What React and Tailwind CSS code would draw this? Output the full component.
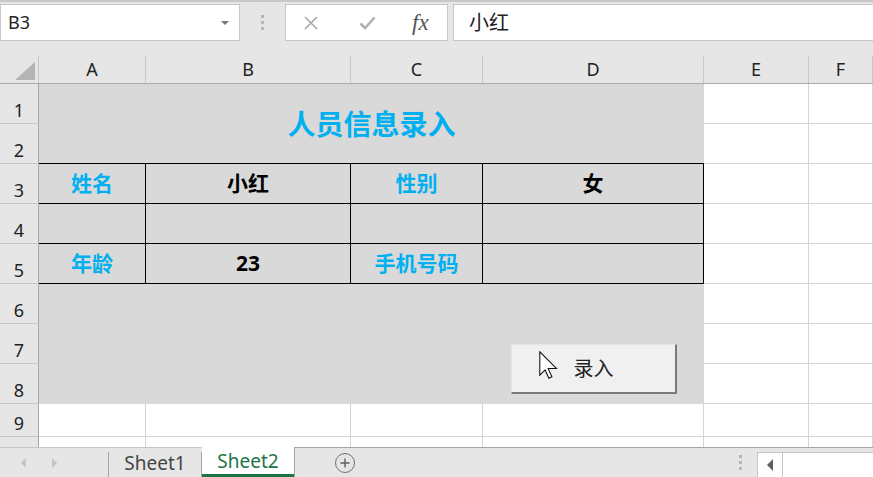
import { Plus } from 'lucide-react';

const font = { fontFamily: '"Noto Sans", "Noto Sans CJK SC", sans-serif' };

function Toolbar() {
  return (
    <div className="h-[56px] bg-[#e6e6e6] border-t-2 border-[#c8c8c8] flex items-start pt-[2px]">
      <div className="w-[240px] h-[37px] bg-white border border-[#c6c6c6] flex items-center justify-between pl-[7px] pr-[10px]">
        <span className="text-[18px] text-[#222]">B3</span>
        <span className="w-0 h-0 border-l-[4px] border-r-[4px] border-t-[4px] border-l-transparent border-r-transparent border-t-[#777]" />
      </div>
      <div className="w-[45px] h-[37px] flex flex-col items-center justify-center gap-[3px]">
        <span className="w-[3px] h-[3px] bg-[#b5b5b5]" />
        <span className="w-[3px] h-[3px] bg-[#b5b5b5]" />
        <span className="w-[3px] h-[3px] bg-[#b5b5b5]" />
      </div>
      <div className="w-[163px] h-[37px] bg-white border border-[#c6c6c6] flex items-center">
        <svg className="ml-[17px]" width="16" height="16" viewBox="0 0 16 16" stroke="#a8a8a8" strokeWidth="1.6" fill="none">
          <path d="M2 2l12 12M14 2L2 14" />
        </svg>
        <svg className="ml-[40px]" width="17" height="14" viewBox="0 0 17 14" stroke="#b0b0b0" strokeWidth="2.6" fill="none">
          <path d="M1.5 7.5l4.5 4.5L15.5 1.5" />
        </svg>
        <span className="ml-[36px] text-[23px] italic text-[#555] leading-none" style={{ fontFamily: '"Liberation Serif", serif' }}>
          fx
        </span>
      </div>
      <div className="ml-[5px] flex-1 h-[37px] bg-white border border-[#c6c6c6] border-r-0 flex items-center pl-[15px]">
        <span className="text-[20px] text-[#222]">小红</span>
      </div>
    </div>
  );
}

function ColumnHeader() {
  const cols = [
    ['A', 'w-[107px]'],
    ['B', 'w-[205px]'],
    ['C', 'w-[132px]'],
    ['D', 'w-[221px]'],
    ['E', 'w-[105px]'],
    ['F', 'flex-1'],
  ];
  return (
    <div className="h-[28px] bg-[#e6e6e6] border-b border-[#ababab] flex">
      <div className="w-[39px] border-r border-[#c8c8c8] flex items-end justify-end pr-[3px] pb-[3px]">
        <span className="w-0 h-0 border-l-[20px] border-b-[18px] border-l-transparent border-b-[#b4b4b4]" />
      </div>
      {cols.map(([c, w]) => (
        <div key={c} className={`${w} border-r border-[#c8c8c8] flex items-center justify-center text-[18px] text-[#222]`}>
          {c}
        </div>
      ))}
    </div>
  );
}

function RowHead({ n, last }) {
  return (
    <div
      className={`bg-[#e6e6e6] border-r border-[#a6a6a6] ${last ? '' : 'border-b border-b-[#c6c6c6]'} flex items-end justify-center pb-[4px] text-[18px] text-[#222] leading-none overflow-hidden`}
    >
      {n}
    </div>
  );
}

function Blank({ last }) {
  return <div className={`bg-white border-r border-[#d4d4d4] ${last ? '' : 'border-b'}`} />;
}

function Cursor() {
  return (
    <svg className="absolute left-[27px] top-[6px]" width="19" height="28" viewBox="0 0 12.5 18.5">
      <path d="M0.5 0.5V16L4 12.5L6.5 18L8.5 17L6 11.5H11.5Z" fill="white" stroke="#111" strokeWidth="0.7" strokeLinejoin="miter" />
    </svg>
  );
}

function Form() {
  const label = 'text-[21px] font-bold text-[#00b0f0]';
  const value = 'text-[21px] font-bold text-black';
  const cell = 'border-r border-b border-black flex items-center justify-center';
  const rows = [
    [['姓名', label], ['小红', value], ['性别', label], ['女', value]],
    [['', label], ['', value], ['', label], ['', value]],
    [['年龄', label], ['23', value], ['手机号码', label], ['', value]],
  ];
  const widths = ['w-[107px]', 'w-[205px]', 'w-[132px]', 'w-[221px]'];
  return (
    <div className="col-start-2 col-span-4 row-start-1 row-span-8 bg-[#d9d9d9] flex flex-col">
      <div className="h-[79px] flex items-center justify-center text-[28px] font-bold text-[#00b0f0]">人员信息录入</div>
      <div className="border-t border-black">
        {rows.map((r, i) => (
          <div key={i} className="flex h-[40px]">
            {r.map(([t, cls], j) => (
              <div key={j} className={`${widths[j]} ${cell} ${cls}`}>
                {t}
              </div>
            ))}
          </div>
        ))}
      </div>
      <div className="flex-1 pt-[60px] pl-[472px]">
        <div className="relative w-[166px] h-[50px] bg-[#f0f0f0] border-t border-l border-[#e4e4e4] border-r-2 border-b-2 border-r-[#7a7a7a] border-b-[#7a7a7a] flex items-center justify-center">
          <Cursor />
          <span className="text-[20px] text-[#222]">录入</span>
        </div>
      </div>
    </div>
  );
}

function Sheet() {
  const body = [];
  for (let r = 1; r <= 8; r++) {
    body.push(<RowHead key={`h${r}`} n={r} />);
    body.push(<Blank key={`e${r}`} />);
    body.push(<Blank key={`f${r}`} />);
  }
  for (let r = 9; r <= 10; r++) {
    body.push(<RowHead key={`h${r}`} n={r === 9 ? 9 : ''} last={r === 10} />);
    for (let c = 0; c < 6; c++) body.push(<Blank key={`${r}-${c}`} last={r === 10} />);
  }
  return (
    <div className="grid grid-cols-[39px_107px_205px_132px_221px_105px_1fr] grid-rows-[repeat(8,40px)_33px_10px]">
      <Form />
      {body}
    </div>
  );
}

function TabBar() {
  return (
    <div className="h-[30px] bg-[#e6e6e6] flex">
      <div className="w-[108px] border-t border-[#c6c6c6] flex items-center pl-[21px] gap-[26px]">
        <span className="w-0 h-0 border-t-[5px] border-b-[5px] border-r-[5px] border-t-transparent border-b-transparent border-r-[#c4c4c4]" />
        <span className="w-0 h-0 border-t-[5px] border-b-[5px] border-l-[5px] border-t-transparent border-b-transparent border-l-[#c4c4c4]" />
      </div>
      <div className="w-[94px] border-t border-[#c6c6c6] flex items-stretch">
        <div className="w-full mt-[4px] border-l border-r border-[#a6a6a6] flex items-center justify-center text-[19px] text-[#444] pb-[3px]">
          Sheet1
        </div>
      </div>
      <div className="w-[92px] bg-white border-b-[3px] border-[#217346] flex items-center justify-center text-[19px] text-[#217346] pt-[1px]">
        Sheet2
      </div>
      <div className="flex-1 border-t border-l border-[#a6a6a6] flex items-center">
        <div className="ml-[40px] w-[20px] h-[20px] rounded-full border-[1.5px] border-[#707070] flex items-center justify-center">
          <Plus size={14} strokeWidth={2.4} color="#606060" />
        </div>
        <div className="ml-auto mr-[15px] flex flex-col gap-[3px]">
          <span className="w-[3px] h-[3px] bg-[#b5b5b5]" />
          <span className="w-[3px] h-[3px] bg-[#b5b5b5]" />
          <span className="w-[3px] h-[3px] bg-[#b5b5b5]" />
        </div>
        <div className="w-[116px] h-[26px] mt-[4px] self-start bg-white border border-[#c6c6c6] border-r-0 flex">
          <div className="w-[25px] border-r border-[#c6c6c6] flex items-center justify-center">
            <span className="w-0 h-0 border-t-[6px] border-b-[6px] border-r-[6px] border-t-transparent border-b-transparent border-r-[#606060]" />
          </div>
        </div>
      </div>
    </div>
  );
}

export default function App() {
  return (
    <div className="w-[873px] h-[477px] overflow-hidden bg-white" style={font}>
      <Toolbar />
      <ColumnHeader />
      <Sheet />
      <TabBar />
    </div>
  );
}
